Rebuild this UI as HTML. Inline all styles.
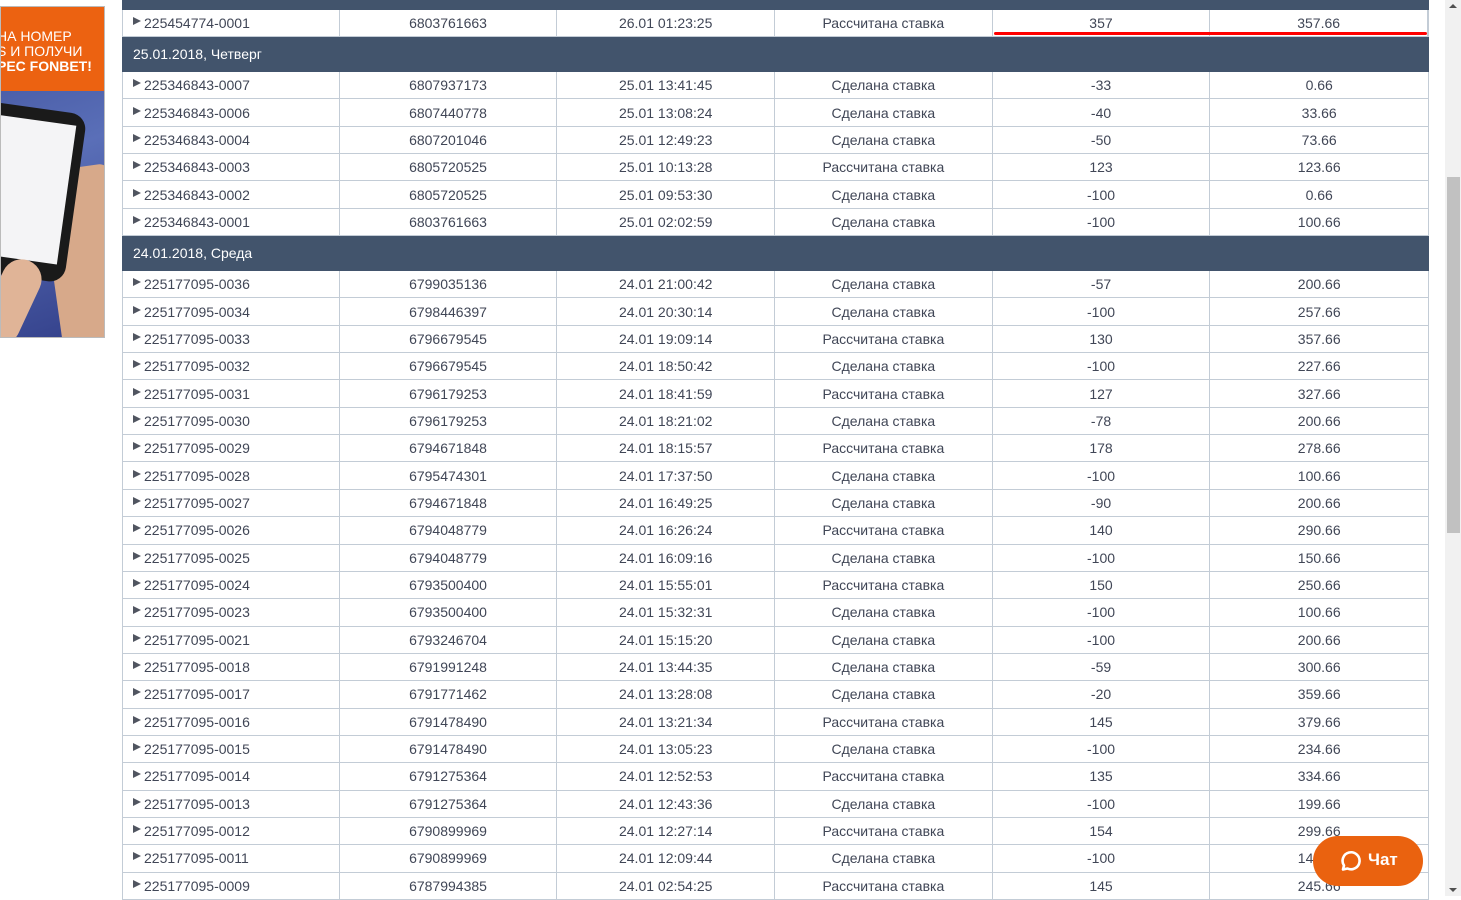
<!DOCTYPE html>
<html><head><meta charset="utf-8">
<style>
*{margin:0;padding:0;box-sizing:border-box}
body{width:1461px;height:896px;overflow:hidden;background:#fff;font-family:"Liberation Sans",Arial,sans-serif;position:relative}
.ad{position:absolute;left:0;top:6px;width:105px;height:332px;border:1px solid #bbb;overflow:hidden;background:linear-gradient(160deg,#3d4f9a 0%,#5a6fb8 45%,#33408a 100%)}
.ad .top{position:absolute;left:-4px;top:0;width:110px;height:84px;background:#ec6211;color:#fff;font-size:14px;line-height:15px;padding-top:22px;z-index:2}
.ad .top div{white-space:nowrap}
.phone{position:absolute;left:-30px;top:100px;width:105px;height:170px;background:#1a1a1a;border-radius:16px;transform:rotate(8deg)}
.screen{position:absolute;left:-22px;top:112px;width:88px;height:140px;background:#f4f4f6;transform:rotate(8deg)}
.hand{position:absolute;left:50px;top:160px;width:70px;height:180px;background:#d7a98a;border-radius:40px 10px 0 0;transform:rotate(-8deg)}
.finger{position:absolute;left:-10px;top:250px;width:40px;height:90px;background:#e0b497;border-radius:20px;transform:rotate(25deg)}
.tbl{position:absolute;left:122px;top:0;width:1307px}
.bar{height:10px;background:#42546c}
.r{display:flex;height:27.35px;border-bottom:1px solid #c3ccd6;border-left:1px solid #c3ccd6;border-right:1px solid #c3ccd6;font-size:14px;color:#404656;align-items:center}
.r div{height:100%;display:flex;align-items:center;justify-content:center;border-right:1px solid #c3ccd6;width:218px}
.r div:last-child{border-right:none}
.r div:first-child{justify-content:flex-start;padding-left:10px;width:217px}
.r div:first-child:before{content:"";border-left:8px solid #505560;border-top:4.5px solid transparent;border-bottom:4.5px solid transparent;margin-right:3px;margin-top:-4px}
.g{height:35px;background:#42546c;color:#fff;font-size:14px;line-height:35px;padding-left:11px}
.sb{position:absolute;left:1445px;top:0;width:16px;height:896px;background:#f1f1f1}
.th{position:absolute;left:1447px;top:177px;width:13px;height:356px;background:#c1c1c1}
.chat{position:absolute;left:1313px;top:836px;width:110px;height:50px;border-radius:25px;background:#ea620f;color:#fff;font-weight:bold;font-size:17px}
</style></head><body>
<div class="ad">
 <div class="top"><div>НА НОМЕР</div><div>Ѕ И ПОЛУЧИ</div><div style="font-weight:bold">РЕС FONBET!</div></div>
 <div class="hand"></div>
 <div class="phone"></div><div class="screen"></div>
 <div class="finger"></div>
</div>
<div class="tbl">
<div class="bar"></div>
<div class="r" style="height:27px;position:relative"><div>225454774-0001</div><div>6803761663</div><div>26.01 01:23:25</div><div>Рассчитана ставка</div><div>357</div><div>357.66</div><span style="position:absolute;left:871px;top:22px;width:433px;height:3px;background:#f00;border-radius:2px"></span></div>
<div class="g">25.01.2018, Четверг</div>
<div class="r"><div>225346843-0007</div><div>6807937173</div><div>25.01 13:41:45</div><div>Сделана ставка</div><div>-33</div><div>0.66</div></div>
<div class="r"><div>225346843-0006</div><div>6807440778</div><div>25.01 13:08:24</div><div>Сделана ставка</div><div>-40</div><div>33.66</div></div>
<div class="r"><div>225346843-0004</div><div>6807201046</div><div>25.01 12:49:23</div><div>Сделана ставка</div><div>-50</div><div>73.66</div></div>
<div class="r"><div>225346843-0003</div><div>6805720525</div><div>25.01 10:13:28</div><div>Рассчитана ставка</div><div>123</div><div>123.66</div></div>
<div class="r"><div>225346843-0002</div><div>6805720525</div><div>25.01 09:53:30</div><div>Сделана ставка</div><div>-100</div><div>0.66</div></div>
<div class="r"><div>225346843-0001</div><div>6803761663</div><div>25.01 02:02:59</div><div>Сделана ставка</div><div>-100</div><div>100.66</div></div>
<div class="g">24.01.2018, Среда</div>
<div class="r"><div>225177095-0036</div><div>6799035136</div><div>24.01 21:00:42</div><div>Сделана ставка</div><div>-57</div><div>200.66</div></div>
<div class="r"><div>225177095-0034</div><div>6798446397</div><div>24.01 20:30:14</div><div>Сделана ставка</div><div>-100</div><div>257.66</div></div>
<div class="r"><div>225177095-0033</div><div>6796679545</div><div>24.01 19:09:14</div><div>Рассчитана ставка</div><div>130</div><div>357.66</div></div>
<div class="r"><div>225177095-0032</div><div>6796679545</div><div>24.01 18:50:42</div><div>Сделана ставка</div><div>-100</div><div>227.66</div></div>
<div class="r"><div>225177095-0031</div><div>6796179253</div><div>24.01 18:41:59</div><div>Рассчитана ставка</div><div>127</div><div>327.66</div></div>
<div class="r"><div>225177095-0030</div><div>6796179253</div><div>24.01 18:21:02</div><div>Сделана ставка</div><div>-78</div><div>200.66</div></div>
<div class="r"><div>225177095-0029</div><div>6794671848</div><div>24.01 18:15:57</div><div>Рассчитана ставка</div><div>178</div><div>278.66</div></div>
<div class="r"><div>225177095-0028</div><div>6795474301</div><div>24.01 17:37:50</div><div>Сделана ставка</div><div>-100</div><div>100.66</div></div>
<div class="r"><div>225177095-0027</div><div>6794671848</div><div>24.01 16:49:25</div><div>Сделана ставка</div><div>-90</div><div>200.66</div></div>
<div class="r"><div>225177095-0026</div><div>6794048779</div><div>24.01 16:26:24</div><div>Рассчитана ставка</div><div>140</div><div>290.66</div></div>
<div class="r"><div>225177095-0025</div><div>6794048779</div><div>24.01 16:09:16</div><div>Сделана ставка</div><div>-100</div><div>150.66</div></div>
<div class="r"><div>225177095-0024</div><div>6793500400</div><div>24.01 15:55:01</div><div>Рассчитана ставка</div><div>150</div><div>250.66</div></div>
<div class="r"><div>225177095-0023</div><div>6793500400</div><div>24.01 15:32:31</div><div>Сделана ставка</div><div>-100</div><div>100.66</div></div>
<div class="r"><div>225177095-0021</div><div>6793246704</div><div>24.01 15:15:20</div><div>Сделана ставка</div><div>-100</div><div>200.66</div></div>
<div class="r"><div>225177095-0018</div><div>6791991248</div><div>24.01 13:44:35</div><div>Сделана ставка</div><div>-59</div><div>300.66</div></div>
<div class="r"><div>225177095-0017</div><div>6791771462</div><div>24.01 13:28:08</div><div>Сделана ставка</div><div>-20</div><div>359.66</div></div>
<div class="r"><div>225177095-0016</div><div>6791478490</div><div>24.01 13:21:34</div><div>Рассчитана ставка</div><div>145</div><div>379.66</div></div>
<div class="r"><div>225177095-0015</div><div>6791478490</div><div>24.01 13:05:23</div><div>Сделана ставка</div><div>-100</div><div>234.66</div></div>
<div class="r"><div>225177095-0014</div><div>6791275364</div><div>24.01 12:52:53</div><div>Рассчитана ставка</div><div>135</div><div>334.66</div></div>
<div class="r"><div>225177095-0013</div><div>6791275364</div><div>24.01 12:43:36</div><div>Сделана ставка</div><div>-100</div><div>199.66</div></div>
<div class="r"><div>225177095-0012</div><div>6790899969</div><div>24.01 12:27:14</div><div>Рассчитана ставка</div><div>154</div><div>299.66</div></div>
<div class="r"><div>225177095-0011</div><div>6790899969</div><div>24.01 12:09:44</div><div>Сделана ставка</div><div>-100</div><div>144.66</div></div>
<div class="r"><div>225177095-0009</div><div>6787994385</div><div>24.01 02:54:25</div><div>Рассчитана ставка</div><div>145</div><div>245.66</div></div>
</div>
<div class="sb"><div style="position:absolute;left:4px;top:4px;border-bottom:4px solid #505050;border-left:4px solid transparent;border-right:4px solid transparent"></div><div style="position:absolute;left:4px;bottom:4px;border-top:4px solid #505050;border-left:4px solid transparent;border-right:4px solid transparent"></div></div>
<div class="th"></div>
<div class="chat">
<svg style="position:absolute;left:24px;top:13px" width="24" height="24" viewBox="0 0 24 24"><path d="M6 20.5 L7 16.5 A8.5 8.5 0 1 1 10.5 19.5 Z" fill="none" stroke="#fff" stroke-width="2.6" stroke-linejoin="round"/></svg>
<span style="position:absolute;left:55px;top:14px">Чат</span>
</div>
</body></html>
